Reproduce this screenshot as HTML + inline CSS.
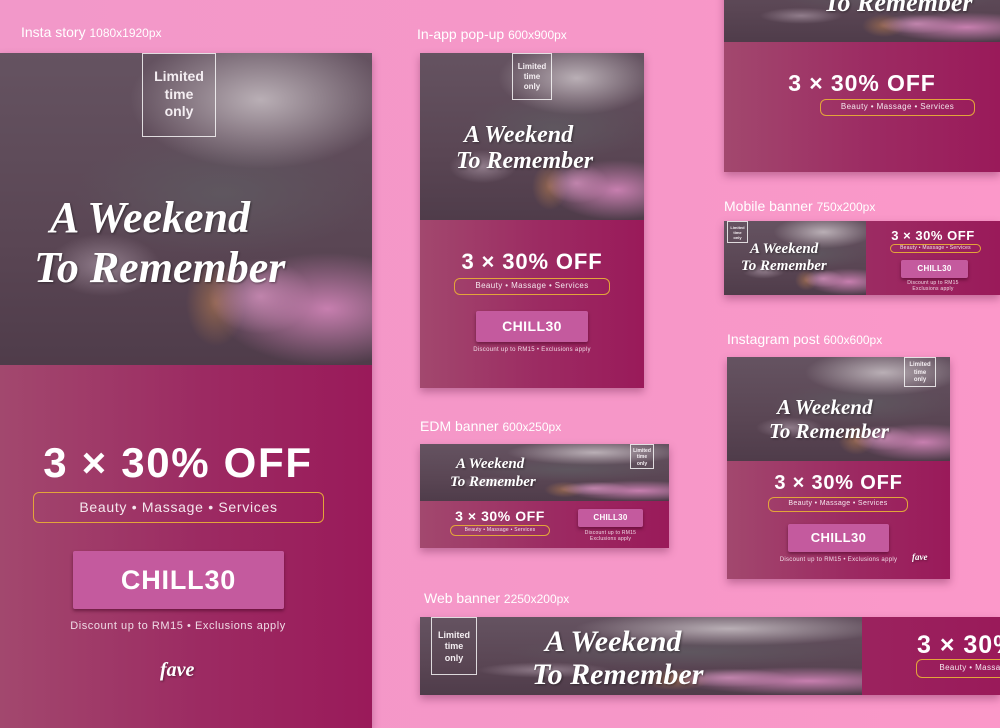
<!DOCTYPE html>
<html><head><meta charset="utf-8"><style>
*{margin:0;padding:0;box-sizing:border-box}
body{width:1000px;height:728px;overflow:hidden;position:relative;background:linear-gradient(90deg,#f298c9,#f697c8 60%,#fb98c9);font-family:"Liberation Sans",sans-serif;color:#fff}
.lbl{position:absolute;font-size:14px;color:#fff;white-space:nowrap}
.lbl small{font-size:12px}
.card{position:absolute;overflow:hidden;box-shadow:0 4px 8px rgba(90,20,60,.35)}
.grad{background:linear-gradient(90deg,#a2486e,#9c2a62 55%,#9a1a5a)}
.photo{position:absolute;overflow:hidden;background:
radial-gradient(ellipse 30% 18% at 88% 82%,rgba(205,130,180,.95),rgba(205,130,180,0) 100%),
radial-gradient(ellipse 14% 12% at 70% 78%,rgba(210,150,190,.8),rgba(210,150,190,0)),
radial-gradient(ellipse 8% 14% at 58% 80%,rgba(160,110,80,.8),rgba(160,110,80,0)),
radial-gradient(ellipse 35% 22% at 70% 15%,rgba(190,180,186,.95),rgba(190,180,186,0)),
radial-gradient(ellipse 40% 20% at 60% 45%,rgba(95,88,96,.9),rgba(95,88,96,0)),
radial-gradient(ellipse 15% 10% at 28% 68%,rgba(200,180,195,.5),rgba(200,180,195,0)),
linear-gradient(180deg,#655361,#5a4654 60%,#4f3c4a)}
.script{position:absolute;font-family:"Liberation Serif",serif;font-style:italic;font-weight:bold;color:#fff;white-space:nowrap;text-shadow:1px 1px 2px rgba(0,0,0,.4);line-height:1}
.lim{position:absolute;border:1px solid rgba(255,255,255,.8);text-align:center;font-weight:bold;color:#f4eef2;line-height:1.25}
.off{position:absolute;font-weight:bold;white-space:nowrap;text-align:center;letter-spacing:.04em}
.pill{position:absolute;border:1.5px solid #e3a53a;border-radius:6px;text-align:center;white-space:nowrap;color:#f5e7ee;letter-spacing:.05em}
.btn{position:absolute;background:#c45a9e;text-align:center;font-weight:bold;box-shadow:0 2px 3px rgba(60,0,30,.5);border-radius:2px;letter-spacing:.03em}
.fine{position:absolute;text-align:center;white-space:nowrap;color:#f0dbe6;letter-spacing:.05em}
</style></head><body>

<div class="lbl" style="left:21px;top:24px">Insta story <small>1080x1920px</small></div>
<div class="lbl" style="left:417px;top:26px">In-app pop-up <small>600x900px</small></div>
<div class="lbl" style="left:724px;top:198px">Mobile banner <small>750x200px</small></div>
<div class="lbl" style="left:727px;top:331px">Instagram post <small>600x600px</small></div>
<div class="lbl" style="left:420px;top:418px">EDM banner <small>600x250px</small></div>
<div class="lbl" style="left:424px;top:590px">Web banner <small>2250x200px</small></div>

<!-- Insta story -->
<div class="card grad" style="left:0;top:53px;width:372px;height:675px">
 <div class="photo" style="left:0;top:0;width:372px;height:312px"></div>
 <div class="lim" style="left:142px;top:0;width:74px;height:84px;padding-top:14px;font-size:14px">Limited<br>time<br>only</div>
 <div class="script" style="left:50px;top:143px;font-size:44px">A Weekend</div>
 <div class="script" style="left:34px;top:193px;font-size:44px">To Remember</div>
 <div class="off" style="left:0;width:356px;top:386px;font-size:42px">3 × 30% OFF</div>
 <div class="pill" style="left:33px;top:439px;width:291px;height:31px;line-height:28px;font-size:14px">Beauty • Massage • Services</div>
 <div class="btn" style="left:73px;top:498px;width:211px;height:58px;line-height:58px;font-size:27px">CHILL30</div>
 <div class="fine" style="left:0;width:356px;top:567px;font-size:11px">Discount up to RM15 • Exclusions apply</div>
 <div class="script" style="left:160px;top:607px;font-size:20px">fave</div>
</div>

<!-- In-app -->
<div class="card grad" style="left:420px;top:53px;width:224px;height:335px">
 <div class="photo" style="left:0;top:0;width:224px;height:167px"></div>
 <div class="lim" style="left:92px;top:0;width:40px;height:47px;padding-top:8px;font-size:8px">Limited<br>time<br>only</div>
 <div class="script" style="left:44px;top:70px;font-size:24px">A Weekend</div>
 <div class="script" style="left:36px;top:96px;font-size:24px">To Remember</div>
 <div class="off" style="left:0;width:224px;top:196px;font-size:22px">3 × 30% OFF</div>
 <div class="pill" style="left:34px;top:225px;width:156px;height:17px;line-height:14px;font-size:8px">Beauty • Massage • Services</div>
 <div class="btn" style="left:56px;top:258px;width:112px;height:31px;line-height:31px;font-size:14px">CHILL30</div>
 <div class="fine" style="left:0;width:224px;top:294px;font-size:6px">Discount up to RM15 • Exclusions apply</div>
</div>

<!-- Top right -->
<div class="card grad" style="left:724px;top:-40px;width:276px;height:212px">
 <div class="photo" style="left:0;top:0;width:276px;height:82px"></div>
 <div class="script" style="left:100px;top:30px;font-size:26px">To Remember</div>
 <div class="off" style="left:0;width:276px;top:110px;font-size:23px">3 × 30% OFF</div>
 <div class="pill" style="left:96px;top:139px;width:155px;height:17px;line-height:14px;font-size:8px">Beauty • Massage • Services</div>
</div>

<!-- Mobile banner -->
<div class="card grad" style="left:724px;top:221px;width:276px;height:74px">
 <div class="photo" style="left:0;top:0;width:142px;height:74px"></div>
 <div class="lim" style="left:3px;top:0;width:21px;height:22px;padding-top:3px;font-size:4px">Limited<br>time<br>only</div>
 <div class="script" style="left:26px;top:21px;font-size:15px">A Weekend</div>
 <div class="script" style="left:17px;top:38px;font-size:15px">To Remember</div>
 <div class="off" style="left:142px;width:134px;top:7px;font-size:13px">3 × 30% OFF</div>
 <div class="pill" style="left:166px;top:23px;width:91px;height:9px;line-height:7px;font-size:5px;border-width:1px">Beauty • Massage • Services</div>
 <div class="btn" style="left:177px;top:39px;width:67px;height:18px;line-height:18px;font-size:8px">CHILL30</div>
 <div class="fine" style="left:142px;width:134px;top:59px;font-size:5px;line-height:6px">Discount up to RM15<br>Exclusions apply</div>
</div>

<!-- Instagram post -->
<div class="card grad" style="left:727px;top:357px;width:223px;height:222px">
 <div class="photo" style="left:0;top:0;width:223px;height:104px"></div>
 <div class="lim" style="left:177px;top:0;width:32px;height:30px;padding-top:4px;font-size:6px">Limited<br>time<br>only</div>
 <div class="script" style="left:50px;top:40px;font-size:21px">A Weekend</div>
 <div class="script" style="left:42px;top:64px;font-size:21px">To Remember</div>
 <div class="off" style="left:0;width:223px;top:115px;font-size:20px">3 × 30% OFF</div>
 <div class="pill" style="left:41px;top:140px;width:140px;height:15px;line-height:12px;font-size:7px">Beauty • Massage • Services</div>
 <div class="btn" style="left:61px;top:167px;width:101px;height:28px;line-height:28px;font-size:13px">CHILL30</div>
 <div class="fine" style="left:0;width:223px;top:200px;font-size:6px">Discount up to RM15 • Exclusions apply</div>
 <div class="script" style="left:185px;top:196px;font-size:9px">fave</div>
</div>

<!-- EDM -->
<div class="card grad" style="left:420px;top:444px;width:249px;height:104px">
 <div class="photo" style="left:0;top:0;width:249px;height:57px"></div>
 <div class="lim" style="left:210px;top:0;width:24px;height:25px;padding-top:3px;font-size:5px">Limited<br>time<br>only</div>
 <div class="script" style="left:36px;top:13px;font-size:15px">A Weekend</div>
 <div class="script" style="left:30px;top:31px;font-size:15px">To Remember</div>
 <div class="off" style="left:30px;width:100px;top:64px;font-size:14px">3 × 30% OFF</div>
 <div class="pill" style="left:30px;top:81px;width:100px;height:11px;line-height:8px;font-size:5px;border-width:1px">Beauty • Massage • Services</div>
 <div class="btn" style="left:158px;top:65px;width:65px;height:18px;line-height:18px;font-size:8px">CHILL30</div>
 <div class="fine" style="left:148px;width:85px;top:86px;font-size:5px;line-height:6px">Discount up to RM15<br>Exclusions apply</div>
</div>

<!-- Web banner -->
<div class="card grad" style="left:420px;top:617px;width:580px;height:78px">
 <div class="photo" style="left:0;top:0;width:442px;height:78px"></div>
 <div class="lim" style="left:11px;top:0;width:46px;height:58px;padding-top:12px;font-size:9px">Limited<br>time<br>only</div>
 <div class="script" style="left:125px;top:10px;font-size:30px">A Weekend</div>
 <div class="script" style="left:112px;top:43px;font-size:30px">To Remember</div>
 <div class="off" style="left:497px;top:14px;font-size:25px;text-align:left">3 × 30% OFF</div>
 <div class="pill" style="left:496px;top:42px;width:160px;height:19px;line-height:16px;font-size:8px">Beauty • Massage • Services</div>
</div>

</body></html>
